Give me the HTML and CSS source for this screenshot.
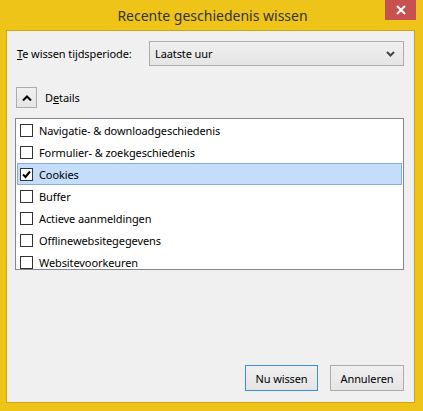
FILE: index.html
```html
<!DOCTYPE html>
<html>
<head>
<meta charset="utf-8">
<link rel="stylesheet" href="styles.css">
</head>
<body>
<div class="window">
  <div class="titlebar">
    <span class="title">Recente geschiedenis wissen</span>
    <div class="close">
      <svg width="10" height="10" viewBox="0 0 10 10"><path d="M1 1 L9 9 M9 1 L1 9" stroke="#fff" stroke-width="2"/></svg>
    </div>
  </div>
  <div class="client">
    <div class="period">
      <label class="period-label"><u>T</u>e wissen tijdsperiode:</label>
      <div class="select">
        <span>Laatste uur</span>
        <svg class="chev" width="9" height="6" viewBox="0 0 9 6"><path d="M1 1 L4.5 4.5 L8 1" fill="none" stroke="#444" stroke-width="2"/></svg>
      </div>
    </div>
    <div class="details">
      <div class="toggle">
        <svg width="10" height="6" viewBox="0 0 10 6"><path d="M1 5.5 L5 1.5 L9 5.5" fill="none" stroke="#000" stroke-width="2"/></svg>
      </div>
      <span>D<u>e</u>tails</span>
    </div>
    <div class="list">
      <div class="item"><span class="box"></span><span>Navigatie- &amp; downloadgeschiedenis</span></div>
      <div class="item"><span class="box"></span><span>Formulier- &amp; zoekgeschiedenis</span></div>
      <div class="item selected"><span class="box"><svg width="11" height="11" viewBox="0 0 11 11"><path d="M2 5.5 L4.5 8 L9 2.5" fill="none" stroke="#000" stroke-width="2"/></svg></span><span>Cookies</span></div>
      <div class="item"><span class="box"></span><span>Buffer</span></div>
      <div class="item"><span class="box"></span><span>Actieve aanmeldingen</span></div>
      <div class="item"><span class="box"></span><span>Offlinewebsitegegevens</span></div>
      <div class="item"><span class="box"></span><span>Websitevoorkeuren</span></div>
    </div>
    <div class="buttons">
      <div class="btn default">Nu wissen</div>
      <div class="btn">Annuleren</div>
    </div>
  </div>
</div>
</body>
</html>
```
FILE: styles.css
```css
html, body {
  margin: 0;
  padding: 0;
  background: #efc419;
}
body {
  font-family: "Noto Sans", "Open Sans", sans-serif;
  font-size: 11px;
  letter-spacing: -0.1px;
  color: #000;
}
.window {
  width: 423px;
  height: 411px;
  box-sizing: border-box;
  background: #efc419;
  display: flex;
  flex-direction: column;
}
.titlebar {
  position: relative;
  height: 30px;
  display: flex;
  align-items: center;
  justify-content: center;
}
.title {
  font-size: 14px;
  letter-spacing: 0;
  color: #333;
  margin-left: 2px;
}
.close {
  position: absolute;
  top: 0;
  right: 7px;
  width: 31px;
  height: 20px;
  background: #c75050;
  display: flex;
  align-items: center;
  justify-content: center;
}
.client {
  flex: 1;
  margin: 0 8px 8px 6px;
  border: 1px solid #cfa612;
  background: #f0f0f0;
  display: flex;
  flex-direction: column;
  padding: 10px 10px 11px 8px;
}
.period {
  display: flex;
  align-items: center;
  height: 25px;
}
.period-label {
  margin-left: 2px;
  width: 132px;
}
.select {
  flex: 1;
  height: 25px;
  box-sizing: border-box;
  border: 1px solid #acacac;
  background: linear-gradient(#f0f0f0, #e5e5e5);
  display: flex;
  align-items: center;
  padding: 0 8px 0 5px;
}
.select span { flex: 1; }
.details {
  display: flex;
  align-items: center;
  margin-top: 21px;
  height: 21px;
}
.toggle {
  width: 21px;
  height: 21px;
  box-sizing: border-box;
  border: 1px solid #acacac;
  background: linear-gradient(#f0f0f0, #e5e5e5);
  display: flex;
  align-items: center;
  justify-content: center;
  margin-left: 1px;
  margin-right: 8px;
}
.list {
  margin-top: 10px;
  height: 152px;
  box-sizing: border-box;
  border: 1px solid #828790;
  background: #fff;
  padding: 0 1px;
  overflow: hidden;
}
.item {
  height: 22px;
  flex: none;
  box-sizing: border-box;
  display: flex;
  align-items: center;
  padding-left: 2px;
  border: 1px solid transparent;
}
.item.selected {
  background: #c4ddfb;
  border-color: #84acdd;
}
.box {
  width: 13px;
  height: 13px;
  box-sizing: border-box;
  border: 1px solid #333;
  background: #fff;
  margin-right: 6px;
  display: flex;
  align-items: center;
  justify-content: center;
}
.buttons {
  margin-top: auto;
  display: flex;
  justify-content: flex-end;
  gap: 12px;
}
.btn {
  height: 26px;
  box-sizing: border-box;
  border: 1px solid #acacac;
  background: linear-gradient(#f0f0f0, #e5e5e5);
  display: flex;
  align-items: center;
  justify-content: center;
  width: 74px;
}
.btn.default {
  border-color: #3c8ce6;
  width: 73px;
}
```
